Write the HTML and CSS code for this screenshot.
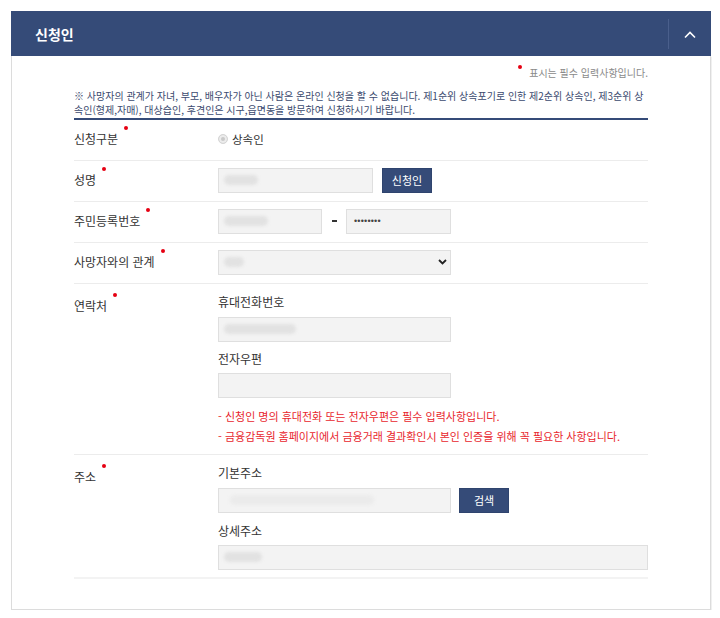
FILE: index.html
```html
<!DOCTYPE html>
<html lang="ko">
<head>
<meta charset="utf-8">
<title>신청인</title>
<link rel="stylesheet" href="styles.css">
</head>
<body>
<section class="panel">
  <header class="panel-head">
    <h2 class="panel-title">신청인</h2>
    <button class="toggle" type="button" aria-label="접기">
      <svg width="12" height="8" viewBox="0 0 12 8"><polyline points="1,6.5 6,1.5 11,6.5" fill="none" stroke="#fff" stroke-width="1.6"/></svg>
    </button>
  </header>
  <div class="panel-body">
    <p class="req-note"><span class="req-dot"></span>표시는 필수 입력사항입니다.</p>
    <p class="notice">※ 사망자의 관계가 자녀, 부모, 배우자가 아닌 사람은 온라인 신청을 할 수 없습니다. 제1순위 상속포기로 인한 제2순위 상속인, 제3순위 상속인(형제,자매), 대상습인, 후견인은 시구,읍면동을 방문하여 신청하시기 바랍니다.</p>

    <div class="row">
      <div class="label"><span class="req">신청구분</span></div>
      <div class="field">
        <span class="radio"></span><span class="radio-text">상속인</span>
      </div>
    </div>

    <div class="row">
      <div class="label"><span class="req">성명</span></div>
      <div class="field">
        <div class="input w-name"><span class="blur" style="width:34px"></span></div>
        <button class="btn" type="button">신청인</button>
      </div>
    </div>

    <div class="row">
      <div class="label"><span class="req">주민등록번호</span></div>
      <div class="field">
        <div class="input w-ssn"><span class="blur" style="width:44px"></span></div>
        <span class="dash-wrap"><span class="dash"></span></span>
        <div class="input w-ssn2"><span class="pw">••••••••</span></div>
      </div>
    </div>

    <div class="row">
      <div class="label"><span class="req">사망자와의 관계</span></div>
      <div class="field">
        <div class="input select w-full"><span class="blur" style="width:20px"></span>
          <svg class="caret" width="9" height="6" viewBox="0 0 9 6"><polyline points="1,1 4.5,4.5 8,1" fill="none" stroke="#222" stroke-width="1.8"/></svg>
        </div>
      </div>
    </div>

    <div class="row stack">
      <div class="label"><span class="req">연락처</span></div>
      <div class="field col">
        <div class="sub">휴대전화번호</div>
        <div class="input w-full"><span class="blur" style="width:72px"></span></div>
        <div class="sub sub2">전자우편</div>
        <div class="input w-full"></div>
        <ul class="warn">
          <li>- 신청인 명의 휴대전화 또는 전자우편은 필수 입력사항입니다.</li>
          <li>- 금융감독원 홈페이지에서 금융거래 결과확인시 본인 인증을 위해 꼭 필요한 사항입니다.</li>
        </ul>
      </div>
    </div>

    <div class="row stack last">
      <div class="label"><span class="req">주소</span></div>
      <div class="field col">
        <div class="sub">기본주소</div>
        <div class="line">
          <div class="input w-full"><span class="blur light" style="width:144px"></span></div>
          <button class="btn btn-search" type="button">검색</button>
        </div>
        <div class="sub sub2">상세주소</div>
        <div class="input w-wide"><span class="blur" style="width:38px"></span></div>
      </div>
    </div>
  </div>
</section>
</body>
</html>
```
FILE: styles.css
```css
* { box-sizing: border-box; }

body {
  margin: 0;
  background: #fff;
  color: #333;
  font-family: "Noto Sans CJK KR", "Noto Sans", sans-serif;
}

.panel {
  margin: 11px 0 0 11px;
  width: 700px;
}

.panel-head {
  display: flex;
  height: 45px;
  background: #354b78;
}

.panel-title {
  flex: 1;
  margin: 0;
  padding-left: 24px;
  font-size: 14px;
  font-weight: 700;
  line-height: 46px;
  color: #fff;
}

.toggle {
  width: 43px;
  margin: 8px 0 7px;
  padding: 2px 0 0;
  border: 0;
  border-left: 1px solid #4a5f8c;
  background: none;
  display: flex;
  align-items: center;
  justify-content: center;
}

.panel-body {
  border: 1px solid #dcdcdc;
  border-top: 0;
  padding: 10px 62px 30px;
  box-shadow: 1px 1px 0 #f0f0f0;
}

.req-note {
  margin: 0;
  text-align: right;
  font-size: 10px;
  line-height: 14px;
  color: #8a8a8a;
}

.req-dot {
  display: inline-block;
  width: 4px;
  height: 4px;
  border-radius: 50%;
  background: #e60012;
  margin-right: 7px;
  vertical-align: top;
  position: relative;
  top: -1px;
}

.notice {
  margin: 9px 0 0;
  font-size: 10px;
  line-height: 14.3px;
  color: #3b4a6e;
  border-bottom: 2px solid #354b78;
}

.row {
  display: flex;
  padding: 7px 0 8px;
  border-bottom: 1px solid #ececec;
}

.row.stack {
  padding: 10px 0 8px;
}

.row.last {
  padding-bottom: 7px;
  border-bottom: 2px solid #f3f3f3;
}

.label {
  width: 144px;
  flex: none;
  align-self: center;
  font-size: 12px;
  line-height: 16px;
  color: #333;
}

.row.stack .label {
  align-self: flex-start;
  padding-top: 4px;
}

.req::after {
  content: "";
  display: inline-block;
  width: 4px;
  height: 4px;
  border-radius: 50%;
  background: #e60012;
  margin-left: 6px;
  vertical-align: top;
  position: relative;
  top: -5px;
}

.field {
  display: flex;
  align-items: center;
  min-height: 25px;
  font-size: 11px;
}

.field.col {
  flex-direction: column;
  align-items: flex-start;
}

.radio {
  width: 10px;
  height: 10px;
  border-radius: 50%;
  background: #c9c9c9;
  border: 1px solid #d6d6d6;
  box-shadow: inset 0 0 0 2px #ececec;
  margin-right: 4px;
}

.radio-text {
  font-size: 11.5px;
  color: #333;
  line-height: 16px;
}

.input {
  height: 25px;
  background: #f3f3f3;
  border: 1px solid #dfdfdf;
  display: flex;
  align-items: center;
  padding-left: 5px;
}

.w-name { width: 155px; }
.w-ssn { width: 104px; }
.w-ssn2 { width: 105px; padding-left: 7px; }
.w-full { width: 233px; }
.w-wide { width: 430px; }

.blur {
  height: 10px;
  border-radius: 5px;
  background: #e2e2e2;
  filter: blur(1.5px);
}

.blur.light {
  background: #ebebeb;
  margin-left: 6px;
}

.select {
  justify-content: space-between;
  padding-right: 3px;
}

.caret { display: block; }

.dash-wrap {
  width: 24px;
  display: flex;
  justify-content: center;
}

.dash {
  width: 5px;
  height: 2px;
  background: #333;
}

.pw {
  font-family: "Liberation Sans", sans-serif;
  font-size: 9px;
  color: #444;
  letter-spacing: 0.2px;
}

.btn {
  height: 25px;
  width: 50px;
  margin-left: 9px;
  padding: 0;
  border: 1px solid #2f446e;
  background: #354b78;
  color: #fff;
  font-family: inherit;
  font-size: 11px;
}

.btn-search { margin-left: 8px; }

.sub {
  font-size: 12px;
  line-height: 16px;
  color: #333;
  margin-bottom: 7px;
}

.sub2 {
  margin-top: 9px;
  margin-bottom: 6px;
}

.row.last .sub2 { margin-top: 10px; }

.line {
  display: flex;
}

.warn {
  list-style: none;
  margin: 8px 0 0;
  padding: 0;
  font-size: 11px;
  line-height: 20px;
  color: #e8262d;
}
```
